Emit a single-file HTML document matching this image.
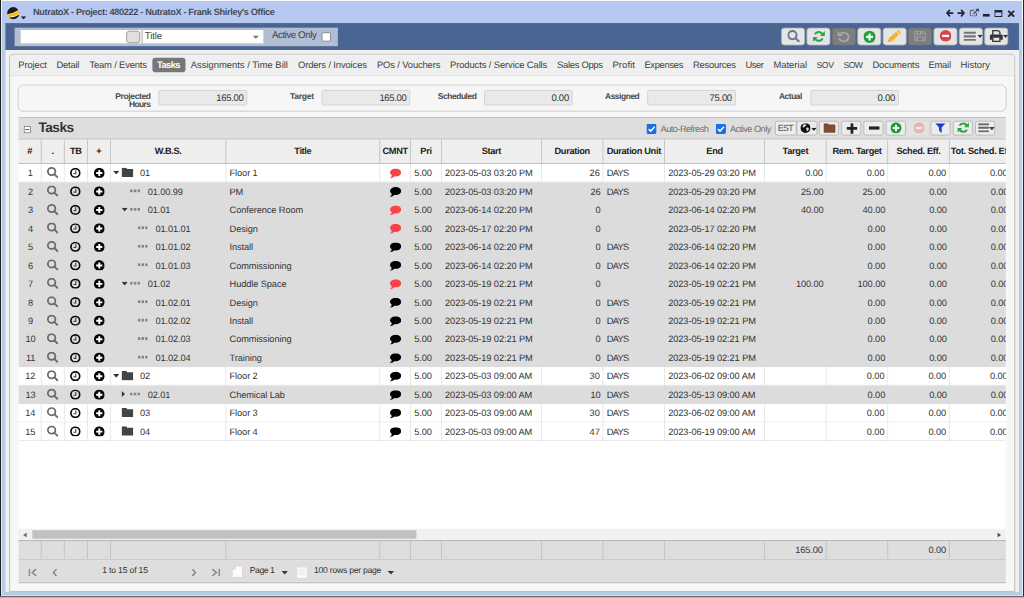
<!DOCTYPE html>
<html lang="en"><head><meta charset="utf-8"><title>NutratoX - Project: 480222</title>
<style>
html,body{margin:0;padding:0;}
body{width:1024px;height:598px;overflow:hidden;background:#b3b4b7;}
#w{position:absolute;left:0;top:0;width:1330.56px;height:777.03px;transform:scale(0.7696);transform-origin:0 0;overflow:hidden;
 font-family:"Liberation Sans",sans-serif;font-size:12px;color:#333;text-rendering:geometricPrecision;}
#w div{position:absolute;box-sizing:border-box;white-space:nowrap;}
#w svg{display:block;}
#f div{position:absolute;}
.t{line-height:1;}
.tbbtn{background:#e5e5e5;border:1px solid #aeb2b8;border-radius:4px;}
.tbbtn.dis{background:#7e7e7e;border-color:#747474;}
.gbtn{background:#ececec;border:1px solid #b0b0b0;border-radius:3px;}
.hd{font-weight:bold;color:#222;text-align:center;}
.cell{line-height:24.6px;height:24px;top:0;color:#333;letter-spacing:-0.12px;overflow:hidden;}
.r{text-align:right;}
</style></head>
<body>
<div id="w">
<div style="left:0px;top:0px;width:1330.56px;height:777.03px;background:#b3b4b7"></div>
<div style="left:0px;top:0px;width:1330.56px;height:774.3px;background:#b5cce4"></div>
<div style="left:0px;top:0px;width:1330.56px;height:30.02px;background:#b7c8f1"></div>
<div style="left:7px;top:30px;width:1317px;height:35px;background:#4b6592"></div>
<div style="left:7px;top:65px;width:1317px;height:704px;background:#f0f0f0"></div>
<div style="left:8.84px;top:8.58px;width:16.37px;height:16.37px"><svg viewBox="0 0 26 26" width="16.37" height="16.37"><circle cx="13" cy="13" r="12.6" fill="#1c1a1a"/><path d="M0.3 15.2 Q13 13.4 24.2 6.2 Q26 10.4 25.6 15.4 Q14 22.6 2.6 21.6 Q0.8 18.6 0.3 15.2 Z" fill="#fff"/><path d="M0.4 16.2 Q13 14.6 24.6 7.4 Q25.8 10.8 25.6 14.4 Q14 21.4 2.0 20.6 Q0.9 18.4 0.4 16.2 Z" fill="#f8bd17"/></svg></div>
<div style="left:26.51px;top:20.79px;width:7.15px;height:4.42px"><svg viewBox="0 0 10 5.4" width="7.15" height="4.42" preserveAspectRatio="none"><path d="M0 0 H10 L5 5.4 Z" fill="#1e1e1e"/></svg></div>
<div class="t" style="left:42.75px;top:9.72px;font-size:12px;font-weight:bold;color:#454b5a;letter-spacing:-0.487px;">NutratoX - Project: 480222 - NutratoX - Frank Shirley's Office</div>
<div style="left:1228.5px;top:12.28px;width:10.07px;height:10.07px"><svg viewBox="0 0 16 14" width="10.07" height="10.07" preserveAspectRatio="none"><path d="M16 7 H3.2" stroke="#23252b" stroke-width="3"/><path d="M8.4 1 L2.4 7 L8.4 13" fill="none" stroke="#23252b" stroke-width="3.2"/></svg></div>
<div style="left:1243.89px;top:12.28px;width:10.07px;height:10.07px"><svg viewBox="0 0 16 14" width="10.07" height="10.07" preserveAspectRatio="none"><path d="M0 7 H12.8" stroke="#23252b" stroke-width="3"/><path d="M7.6 1 L13.6 7 L7.6 13" fill="none" stroke="#23252b" stroke-width="3.2"/></svg></div>
<div style="left:1259.68px;top:10.98px;width:12.47px;height:10.52px"><svg viewBox="0 0 16 14" width="12.47" height="10.52" preserveAspectRatio="none"><path d="M11.2 8.2 V11.8 Q11.2 13.2 9.8 13.2 H2.2 Q0.8 13.2 0.8 11.8 V4.6 Q0.8 3.2 2.2 3.2 H7" fill="none" stroke="#3c4048" stroke-width="1.6"/><path d="M6.4 9.2 L13.2 2.4" stroke="#3c4048" stroke-width="2.1"/><path d="M9.2 0 H16 V6.8 Z" fill="#3c4048"/></svg></div>
<div style="left:1277.03px;top:18.32px;width:9.42px;height:3.51px"><svg viewBox="0 0 14 4" width="9.42" height="3.51" preserveAspectRatio="none"><rect x="0" y="0" width="14" height="4" fill="#23252b"/></svg></div>
<div style="left:1292.16px;top:12.6px;width:10.52px;height:9.36px"><svg viewBox="0 0 16 13" width="10.52" height="9.36" preserveAspectRatio="none"><path d="M0 0 H16 V13 H0 Z M2 4.4 V11 H14 V4.4 Z" fill="#23252b" fill-rule="evenodd"/></svg></div>
<div style="left:1308.86px;top:12.6px;width:9.75px;height:9.75px"><svg viewBox="0 0 14 14" width="9.75" height="9.75" preserveAspectRatio="none"><path d="M1.6 1.6 L12.4 12.4 M12.4 1.6 L1.6 12.4" stroke="#23252b" stroke-width="3.6"/></svg></div>
<div style="left:19px;top:36px;width:420px;height:24px;background:#b1bed3"></div>
<div style="left:26px;top:38px;width:158px;height:19px;background:#fff;border:1px solid #c8c8c8;border-top-color:#a8a8a8"></div>
<div style="left:164px;top:40px;width:18px;height:16px;background:#e0e0e0;border:1.5px solid #8a8a8a;border-radius:4px"></div>
<div style="left:185px;top:38px;width:158px;height:19px;background:#fff;border:1px solid #c8c8c8;border-top-color:#a8a8a8"></div>
<div class="t" style="left:188.02px;top:40.92px;font-size:12.6px;color:#444;letter-spacing:-0.149px;">Title</div>
<div style="left:327.96px;top:46.26px;width:8.84px;height:4.48px"><svg viewBox="0 0 10 5.4" width="8.84" height="4.48" preserveAspectRatio="none"><path d="M0 0 H10 L5 5.4 Z" fill="#777"/></svg></div>
<div class="t" style="left:353.3px;top:40.31px;font-size:12.7px;color:#3a3f4a;letter-spacing:-0.575px;">Active Only</div>
<div style="left:418px;top:42px;width:12px;height:12px;background:#fff;border:1px solid #767676;border-radius:2px"></div>
<div class="tbbtn" style="left:1015px;top:36px;width:31px;height:23px"></div>
<div class="tbbtn" style="left:1048px;top:36px;width:31px;height:23px"></div>
<div class="tbbtn dis" style="left:1081px;top:36px;width:31px;height:23px"></div>
<div class="tbbtn" style="left:1114px;top:36px;width:31px;height:23px"></div>
<div class="tbbtn" style="left:1147px;top:36px;width:31px;height:23px"></div>
<div class="tbbtn dis" style="left:1180px;top:36px;width:31px;height:23px"></div>
<div class="tbbtn" style="left:1213px;top:36px;width:31px;height:23px"></div>
<div class="tbbtn" style="left:1246px;top:36px;width:31px;height:23px"></div>
<div class="tbbtn" style="left:1279px;top:36px;width:31px;height:23px"></div>
<div style="left:1023.39px;top:39.24px;width:16.18px;height:16.05px"><svg viewBox="0 0 16 16" width="16.18" height="16.05" preserveAspectRatio="none"><circle cx="6.6" cy="6.6" r="5.3" fill="none" stroke="#64788f" stroke-width="2.5"/><path d="M10.6 10.6 L14.7 14.7" stroke="#64788f" stroke-width="2.7" stroke-linecap="round"/></svg></div>
<div style="left:1055.87px;top:39.89px;width:15.85px;height:14.75px"><svg viewBox="0 0.6 16 14.8" width="15.85" height="14.75" preserveAspectRatio="none"><path d="M13.2 6.3 A5.6 5.6 0 0 0 2.9 5.2" fill="none" stroke="#2aa745" stroke-width="2.7"/><path d="M15.9 0.8 V7.4 H9.3 Z" fill="#2aa745"/><path d="M2.8 9.7 A5.6 5.6 0 0 0 13.1 10.8" fill="none" stroke="#2aa745" stroke-width="2.7"/><path d="M0.1 15.2 V8.6 H6.7 Z" fill="#2aa745"/></svg></div>
<div style="left:1088.49px;top:40.41px;width:16.05px;height:14.55px"><svg viewBox="0 0.4 15.4 15.2" width="16.05" height="14.55" preserveAspectRatio="none"><path d="M3.9 4.6 A6 6 0 1 1 2.2 10.2" fill="none" stroke="#a6a6a6" stroke-width="2.5"/><path d="M0.2 0.6 V7.6 H7.2 Z" fill="#a6a6a6"/></svg></div>
<div style="left:1122.14px;top:39.89px;width:15.72px;height:15.85px"><svg viewBox="0 0 16 16" width="15.72" height="15.85" preserveAspectRatio="none"><circle cx="8" cy="8" r="8" fill="#1f9e3a"/><path d="M8 3.4V12.6M3.4 8H12.6" stroke="#fff" stroke-width="2.9"/></svg></div>
<div style="left:1154.37px;top:39.11px;width:16.5px;height:15.46px"><svg viewBox="0 0 16 16" width="16.5" height="15.46" preserveAspectRatio="none"><path d="M0.2 15.8 L1.0 11.2 L9.9 2.3 L13.7 6.1 L4.8 15.0 Z" fill="#f2b22a"/><path d="M10.9 1.3 L11.9 0.4 Q12.6 -0.1 13.3 0.5 L15.5 2.7 Q16.1 3.4 15.6 4.1 L14.7 5.1 Z" fill="#f2b22a"/><path d="M0.2 15.8 L0.7 13.2 L2.8 15.3 Z" fill="#d99a1c"/></svg></div>
<div style="left:1187.89px;top:40.02px;width:15.33px;height:13.64px"><svg viewBox="0 0 16 16" width="15.33" height="13.64" preserveAspectRatio="none"><path d="M0.8 2 Q0.8 0.8 2 0.8 H11.4 L15.2 4.6 V14 Q15.2 15.2 14 15.2 H2 Q0.8 15.2 0.8 14 Z" fill="none" stroke="#a3a3a3" stroke-width="1.7"/><path d="M4.2 1 V5.4 H10.4 V1" fill="none" stroke="#a3a3a3" stroke-width="1.6"/><path d="M3.8 15 V9.6 H12.2 V15" fill="none" stroke="#a3a3a3" stroke-width="1.6"/><rect x="7.8" y="1.8" width="1.6" height="2.6" fill="#a3a3a3"/></svg></div>
<div style="left:1221.02px;top:38.85px;width:15.46px;height:15.33px"><svg viewBox="0 0 16 16" width="15.46" height="15.33" preserveAspectRatio="none"><circle cx="8" cy="8" r="8" fill="#d5474d"/><path d="M3.4 8H12.6" stroke="#fff" stroke-width="2.9"/></svg></div>
<div style="left:1252.34px;top:40.54px;width:16.11px;height:12.47px"><svg viewBox="0 0 16 12" width="16.11" height="12.47" preserveAspectRatio="none"><path d="M0 1.3H16M0 6H16M0 10.7H16" stroke="#757575" stroke-width="2.6"/></svg></div>
<div style="left:1270.01px;top:45.48px;width:7.02px;height:4.22px"><svg viewBox="0 0 10 5.4" width="7.02" height="4.22" preserveAspectRatio="none"><path d="M0 0 H10 L5 5.4 Z" fill="#333"/></svg></div>
<div style="left:1285.6px;top:38.85px;width:17.28px;height:15.72px"><svg viewBox="0 0 16 15" width="17.28" height="15.72" preserveAspectRatio="none"><path d="M3.7 6 V0.8 H10.3 L12.3 2.8 V6" fill="none" stroke="#333" stroke-width="1.6"/><path d="M0 7.6 Q0 5.6 2 5.6 H14 Q16 5.6 16 7.6 V12 H12.6 V9.6 H3.4 V12 H0 Z" fill="#333"/><path d="M3.7 9.6 V14.2 H12.3 V9.6" fill="none" stroke="#333" stroke-width="1.6"/></svg></div>
<div style="left:1302.88px;top:45.48px;width:7.15px;height:4.22px"><svg viewBox="0 0 10 5.4" width="7.15" height="4.22" preserveAspectRatio="none"><path d="M0 0 H10 L5 5.4 Z" fill="#333"/></svg></div>
<div style="left:12px;top:70px;width:1307px;height:699px;background:#f7f7f7;border:1px solid #adadad;border-radius:5px 5px 0 0"></div>
<div style="left:13px;top:71px;width:1305px;height:28px;background:#efefef;border-bottom:1px solid #c4c4c4;border-radius:4px 4px 0 0"></div>
<div style="left:198px;top:75px;width:43px;height:19px;background:#777;border-radius:4px"></div>
<div class="t" style="left:23.65px;top:78.68px;font-size:12.2px;color:#3e3e3e;letter-spacing:-0.091px;">Project</div>
<div class="t" style="left:73.28px;top:78.68px;font-size:12.2px;color:#3e3e3e;letter-spacing:-0.261px;">Detail</div>
<div class="t" style="left:116.16px;top:78.68px;font-size:12.2px;color:#3e3e3e;letter-spacing:-0.205px;">Team / Events</div>
<div class="t" style="left:204.0px;top:78.68px;font-size:12.2px;font-weight:bold;color:#fff;letter-spacing:-0.755px;">Tasks</div>
<div class="t" style="left:247.92px;top:78.68px;font-size:12.2px;color:#3e3e3e;letter-spacing:0.009px;">Assignments / Time Bill</div>
<div class="t" style="left:387.21px;top:78.68px;font-size:12.2px;color:#3e3e3e;letter-spacing:-0.16px;">Orders / Invoices</div>
<div class="t" style="left:489.86px;top:78.68px;font-size:12.2px;color:#3e3e3e;letter-spacing:-0.183px;">POs / Vouchers</div>
<div class="t" style="left:584.72px;top:78.68px;font-size:12.2px;color:#3e3e3e;letter-spacing:-0.128px;">Products / Service Calls</div>
<div class="t" style="left:723.75px;top:78.68px;font-size:12.2px;color:#3e3e3e;letter-spacing:-0.366px;">Sales Opps</div>
<div class="t" style="left:795.74px;top:78.68px;font-size:12.2px;color:#3e3e3e;letter-spacing:0.178px;">Profit</div>
<div class="t" style="left:837.32px;top:78.68px;font-size:12.2px;color:#3e3e3e;letter-spacing:-0.415px;">Expenses</div>
<div class="t" style="left:900.47px;top:78.68px;font-size:12.2px;color:#3e3e3e;letter-spacing:-0.305px;">Resources</div>
<div class="t" style="left:968.56px;top:78.68px;font-size:12.2px;color:#3e3e3e;letter-spacing:-0.53px;">User</div>
<div class="t" style="left:1004.94px;top:78.68px;font-size:12.2px;color:#3e3e3e;letter-spacing:0.038px;">Material</div>
<div class="t" style="left:1060.81px;top:79.53px;font-size:11.2px;color:#3e3e3e;letter-spacing:-0.392px;">SOV</div>
<div class="t" style="left:1095.89px;top:79.53px;font-size:11.2px;color:#3e3e3e;letter-spacing:-0.643px;">SOW</div>
<div class="t" style="left:1133.58px;top:78.68px;font-size:12.2px;color:#3e3e3e;letter-spacing:-0.079px;">Documents</div>
<div class="t" style="left:1206.34px;top:78.68px;font-size:12.2px;color:#3e3e3e;letter-spacing:-0.285px;">Email</div>
<div class="t" style="left:1247.92px;top:78.68px;font-size:12.2px;color:#3e3e3e;letter-spacing:0.084px;">History</div>
<div style="left:23px;top:110px;width:1285px;height:35px;background:#f6f6f6;border:1px solid #c2c2c2;border-radius:7px"></div>
<div class="t" style="left:149.69px;top:120.76px;font-size:11px;font-weight:bold;color:#4a4a4a;letter-spacing:-0.451px;">Projected</div>
<div class="t" style="left:167.49px;top:131.15px;font-size:11px;font-weight:bold;color:#4a4a4a;letter-spacing:-0.766px;">Hours</div>
<div style="left:206px;top:117px;width:115px;height:20px;background:#e9e9e9;border:1px solid #cbcbcb;border-radius:2px"></div>
<div class="t" style="left:281.06px;top:121.13px;font-size:12.4px;color:#333;letter-spacing:-0.439px;">165.00</div>
<div class="t" style="left:376.82px;top:120.76px;font-size:11px;font-weight:bold;color:#4a4a4a;letter-spacing:-0.323px;">Target</div>
<div style="left:418px;top:117px;width:115px;height:20px;background:#e9e9e9;border:1px solid #cbcbcb;border-radius:2px"></div>
<div class="t" style="left:492.98px;top:121.13px;font-size:12.4px;color:#333;letter-spacing:-0.439px;">165.00</div>
<div class="t" style="left:568.87px;top:120.76px;font-size:11px;font-weight:bold;color:#4a4a4a;letter-spacing:-0.602px;">Scheduled</div>
<div style="left:629px;top:117px;width:115px;height:20px;background:#e9e9e9;border:1px solid #cbcbcb;border-radius:2px"></div>
<div class="t" style="left:716.48px;top:121.13px;font-size:12.4px;color:#333;letter-spacing:-0.335px;">0.00</div>
<div class="t" style="left:786.12px;top:120.76px;font-size:11px;font-weight:bold;color:#4a4a4a;letter-spacing:-0.613px;">Assigned</div>
<div style="left:841px;top:117px;width:115px;height:20px;background:#e9e9e9;border:1px solid #cbcbcb;border-radius:2px"></div>
<div class="t" style="left:922.04px;top:121.13px;font-size:12.4px;color:#333;letter-spacing:-0.416px;">75.00</div>
<div class="t" style="left:1012.21px;top:120.76px;font-size:11px;font-weight:bold;color:#4a4a4a;letter-spacing:-0.642px;">Actual</div>
<div style="left:1053px;top:117px;width:115px;height:20px;background:#e9e9e9;border:1px solid #cbcbcb;border-radius:2px"></div>
<div class="t" style="left:1140.14px;top:121.13px;font-size:12.4px;color:#333;letter-spacing:-0.335px;">0.00</div>
<div style="left:24px;top:152px;width:1283px;height:604px;background:#fff"></div>
<div style="left:24px;top:756px;width:1283px;height:2px;background:linear-gradient(#b4b4b4,#d0d0d0)"></div>
<div style="left:24px;top:152px;width:1283px;height:28px;background:#dedede;border-top:1px solid #bcbcbc"></div>
<div style="left:31px;top:164px;width:9px;height:9px;background:#fff;border:1px solid #777"></div>
<div style="left:33px;top:168px;width:5px;height:1px;background:#222"></div>
<div class="t" style="left:50.03px;top:156.58px;font-size:17.8px;font-weight:bold;color:#333;letter-spacing:-0.723px;">Tasks</div>
<div style="left:840.18px;top:160.73px;width:13.25px;height:12.99px"><svg viewBox="0 0 12 12" width="13.25" height="12.99" preserveAspectRatio="none"><rect x="0" y="0" width="12" height="12" rx="2" fill="#1a6fe8"/><path d="M2.6 6.3 L5 8.7 L9.6 3.5" fill="none" stroke="#fff" stroke-width="1.8"/></svg></div>
<div class="t" style="left:858.37px;top:161.1px;font-size:12px;color:#707070;letter-spacing:-0.722px;">Auto-Refresh</div>
<div style="left:930.48px;top:160.73px;width:13.25px;height:12.99px"><svg viewBox="0 0 12 12" width="13.25" height="12.99" preserveAspectRatio="none"><rect x="0" y="0" width="12" height="12" rx="2" fill="#1a6fe8"/><path d="M2.6 6.3 L5 8.7 L9.6 3.5" fill="none" stroke="#fff" stroke-width="1.8"/></svg></div>
<div class="t" style="left:948.54px;top:161.1px;font-size:12px;color:#707070;letter-spacing:-0.702px;">Active Only</div>
<div class="gbtn" style="left:1007px;top:157px;width:28px;height:19px;border-radius:3px 0 0 3px;background:#eee"></div>
<div class="t" style="left:1010.65px;top:161.18px;font-size:11.6px;color:#4c4c4c;letter-spacing:-0.885px;">EST</div>
<div class="gbtn" style="left:1035px;top:157px;width:27px;height:19px;border-radius:0 3px 3px 0"></div>
<div style="left:1039.89px;top:160.41px;width:13.32px;height:12.67px"><svg viewBox="0 0 16 16" width="13.32" height="12.67" preserveAspectRatio="none"><circle cx="8" cy="8" r="8" fill="#111"/><path d="M4.6 2.2 Q8 0.8 9.6 3 Q8.8 5.2 6.6 5.4 Q6 7.6 3.8 6.8 Q2.6 4.8 4.6 2.2 Z M9.2 7.4 Q12 6.4 13.4 9 Q13 12.2 10.6 13.4 Q9.2 12.2 9.8 10.4 Q8.2 9 9.2 7.4 Z" fill="#ddd"/></svg></div>
<div style="left:1053.79px;top:165.67px;width:7.15px;height:4.22px"><svg viewBox="0 0 10 5.4" width="7.15" height="4.22" preserveAspectRatio="none"><path d="M0 0 H10 L5 5.4 Z" fill="#222"/></svg></div>
<div class="gbtn" style="left:1064px;top:157px;width:26px;height:19px;"></div>
<div class="gbtn" style="left:1093px;top:157px;width:26px;height:19px;"></div>
<div class="gbtn" style="left:1122px;top:157px;width:26px;height:19px;"></div>
<div class="gbtn" style="left:1151px;top:157px;width:26px;height:19px;"></div>
<div class="gbtn" style="left:1180px;top:157px;width:26px;height:19px;background:#e3e3e3;border-color:#e0e0e0;"></div>
<div class="gbtn" style="left:1209px;top:157px;width:26px;height:19px;"></div>
<div class="gbtn" style="left:1238px;top:157px;width:26px;height:19px;"></div>
<div class="gbtn" style="left:1267px;top:157px;width:26px;height:19px;"></div>
<div style="left:1070.3px;top:160.08px;width:15.59px;height:12.6px"><svg viewBox="0 0 16 13" width="15.59" height="12.6" preserveAspectRatio="none"><path d="M0 1.4 Q0 0 1.4 0 H5.6 Q7 0 7 1.4 V1.8 H14.6 Q16 1.8 16 3.2 V11.6 Q16 13 14.6 13 H1.4 Q0 13 0 11.6 Z" fill="#7f4c33"/></svg></div>
<div style="left:1100.05px;top:159.76px;width:14.03px;height:13.77px"><svg viewBox="0 0 14 14" width="14.03" height="13.77" preserveAspectRatio="none"><path d="M7 0V14M0 7H14" stroke="#222" stroke-width="3.6"/></svg></div>
<div style="left:1129.29px;top:164.24px;width:14.03px;height:4.42px"><svg viewBox="0 0 14 3.6" width="14.03" height="4.42" preserveAspectRatio="none"><rect x="0" y="0" width="14" height="3.6" fill="#222"/></svg></div>
<div style="left:1157.35px;top:158.78px;width:14.42px;height:14.55px"><svg viewBox="0 0 16 16" width="14.42" height="14.55" preserveAspectRatio="none"><circle cx="8" cy="8" r="8" fill="#259a38"/><path d="M8 3.4V12.6M3.4 8H12.6" stroke="#fff" stroke-width="2.9"/></svg></div>
<div style="left:1186.59px;top:158.78px;width:14.42px;height:14.55px"><svg viewBox="0 0 16 16" width="14.42" height="14.55" preserveAspectRatio="none"><circle cx="8" cy="8" r="8" fill="#e9b3b8"/><path d="M3.4 8H12.6" stroke="#f6e9ea" stroke-width="2.9"/></svg></div>
<div style="left:1215.31px;top:160.41px;width:13.77px;height:12.67px"><svg viewBox="0 0 16 15" width="13.77" height="12.67" preserveAspectRatio="none"><path d="M0.3 0 H15.7 L10 6.6 V15 L6 11.8 V6.6 Z" fill="#1a3fd6"/></svg></div>
<div style="left:1244.28px;top:159.3px;width:15.2px;height:13.77px"><svg viewBox="0 0.6 16 14.8" width="15.2" height="13.77" preserveAspectRatio="none"><path d="M13.2 6.3 A5.6 5.6 0 0 0 2.9 5.2" fill="none" stroke="#2aa745" stroke-width="2.7"/><path d="M15.9 0.8 V7.4 H9.3 Z" fill="#2aa745"/><path d="M2.8 9.7 A5.6 5.6 0 0 0 13.1 10.8" fill="none" stroke="#2aa745" stroke-width="2.7"/><path d="M0.1 15.2 V8.6 H6.7 Z" fill="#2aa745"/></svg></div>
<div style="left:1270.53px;top:160.08px;width:14.62px;height:12.15px"><svg viewBox="0 0 16 12" width="14.62" height="12.15" preserveAspectRatio="none"><path d="M0 1.3H16M0 6H16M0 10.7H16" stroke="#666" stroke-width="2.6"/></svg></div>
<div style="left:1285.28px;top:164.83px;width:7.6px;height:4.42px"><svg viewBox="0 0 10 5.4" width="7.6" height="4.42" preserveAspectRatio="none"><path d="M0 0 H10 L5 5.4 Z" fill="#444"/></svg></div>
<div style="left:24px;top:180px;width:1283px;height:33px;background:#eeeeee;border-top:1px solid #b2b2b2;border-bottom:1px solid #b4b4b4;overflow:hidden">
<div class="hd" style="left:0px;top:0;width:30px;height:33px;line-height:31.6px;font-size:12px;letter-spacing:-0.42px;border-right:1px solid #bababa;overflow:hidden;">#</div>
<div class="hd" style="left:30px;top:0;width:30px;height:33px;line-height:31.6px;font-size:12px;letter-spacing:-0.42px;border-right:1px solid #bababa;overflow:hidden;">.</div>
<div class="hd" style="left:60px;top:0;width:30px;height:33px;line-height:31.6px;font-size:12px;letter-spacing:-0.42px;border-right:1px solid #bababa;overflow:hidden;">TB</div>
<div class="hd" style="left:90px;top:0;width:30px;height:33px;line-height:31.6px;font-size:12px;letter-spacing:-0.42px;border-right:1px solid #bababa;overflow:hidden;">+</div>
<div class="hd" style="left:120px;top:0;width:150px;height:33px;line-height:31.6px;font-size:12px;letter-spacing:-0.42px;border-right:1px solid #bababa;overflow:hidden;">W.B.S.</div>
<div class="hd" style="left:270px;top:0;width:200px;height:33px;line-height:31.6px;font-size:12px;letter-spacing:-0.42px;border-right:1px solid #bababa;overflow:hidden;">Title</div>
<div class="hd" style="left:470px;top:0;width:40px;height:33px;line-height:31.6px;font-size:12px;letter-spacing:-0.42px;border-right:1px solid #bababa;overflow:hidden;">CMNT</div>
<div class="hd" style="left:510px;top:0;width:40px;height:33px;line-height:31.6px;font-size:12px;letter-spacing:-0.42px;border-right:1px solid #bababa;overflow:hidden;">Pri</div>
<div class="hd" style="left:550px;top:0;width:130px;height:33px;line-height:31.6px;font-size:12px;letter-spacing:-0.42px;border-right:1px solid #bababa;overflow:hidden;">Start</div>
<div class="hd" style="left:680px;top:0;width:80px;height:33px;line-height:31.6px;font-size:12px;letter-spacing:-0.42px;border-right:1px solid #bababa;overflow:hidden;">Duration</div>
<div class="hd" style="left:760px;top:0;width:80px;height:33px;line-height:31.6px;font-size:12px;letter-spacing:-0.42px;border-right:1px solid #bababa;overflow:hidden;">Duration Unit</div>
<div class="hd" style="left:840px;top:0;width:130px;height:33px;line-height:31.6px;font-size:12px;letter-spacing:-0.42px;border-right:1px solid #bababa;overflow:hidden;">End</div>
<div class="hd" style="left:970px;top:0;width:80px;height:33px;line-height:31.6px;font-size:12px;letter-spacing:-0.42px;border-right:1px solid #bababa;overflow:hidden;">Target</div>
<div class="hd" style="left:1050px;top:0;width:80px;height:33px;line-height:31.6px;font-size:12px;letter-spacing:-0.42px;border-right:1px solid #bababa;overflow:hidden;">Rem. Target</div>
<div class="hd" style="left:1130px;top:0;width:80px;height:33px;line-height:31.6px;font-size:12px;letter-spacing:-0.42px;border-right:1px solid #bababa;overflow:hidden;">Sched. Eff.</div>
<div class="hd" style="left:1210px;top:0;width:80px;height:33px;line-height:31.6px;font-size:12px;letter-spacing:-0.42px;border-right:1px solid #bababa;overflow:hidden;text-align:left;padding-left:1.5px;">Tot. Sched. Eff.</div>
</div>
<div style="left:24px;top:213px;width:1283px;height:474px;overflow:hidden">
<div style="left:0;top:0px;width:1283px;height:24px;background:#fff;border-bottom:1px solid #e4e4e4;">
<div class="cell" style="left:0px;width:30px;border-right:1px solid #e2e2e2;text-align:center;padding-left:1.6px;">1</div>
<div class="cell" style="left:30px;width:30px;border-right:1px solid #e2e2e2;"></div>
<div class="cell" style="left:60px;width:30px;border-right:1px solid #e2e2e2;"></div>
<div class="cell" style="left:90px;width:30px;border-right:1px solid #e2e2e2;"></div>
<div class="cell" style="left:120px;width:150px;border-right:1px solid #e2e2e2;"></div>
<div class="cell" style="left:470px;width:40px;border-right:1px solid #e2e2e2;"></div>
<div style="left:37.33px;top:4.29px;width:14.75px;height:14.29px"><svg viewBox="0 0 16 16" width="14.75" height="14.29" preserveAspectRatio="none"><circle cx="6.6" cy="6.6" r="5.3" fill="none" stroke="#6a6a6a" stroke-width="2.5"/><path d="M10.6 10.6 L14.7 14.7" stroke="#6a6a6a" stroke-width="2.7" stroke-linecap="round"/></svg></div>
<div style="left:67.35px;top:4.61px;width:13.77px;height:13.45px"><svg viewBox="0 0 16 16" width="13.77" height="13.45" preserveAspectRatio="none"><circle cx="8" cy="8" r="6.7" fill="none" stroke="#0a0a0a" stroke-width="2.6"/><path d="M8.7 3.9 V9.1 H5.2" fill="none" stroke="#444" stroke-width="1.7"/></svg></div>
<div style="left:97.62px;top:4.61px;width:14.03px;height:13.77px"><svg viewBox="0 0 16 16" width="14.03" height="13.77" preserveAspectRatio="none"><circle cx="8" cy="8" r="8" fill="#050505"/><path d="M8 3.4V12.6M3.4 8H12.6" stroke="#fff" stroke-width="2.9"/></svg></div>
<div style="left:123.48px;top:9.36px;width:8.06px;height:4.87px"><svg viewBox="0 0 10 5.4" width="8.06" height="4.87" preserveAspectRatio="none"><path d="M0 0 H10 L5 5.4 Z" fill="#333"/></svg></div>
<div style="left:133.61px;top:4.61px;width:15.72px;height:12.67px"><svg viewBox="0 0 16 13" width="15.72" height="12.67" preserveAspectRatio="none"><path d="M0 1.4 Q0 0 1.4 0 H5.6 Q7 0 7 1.4 V1.8 H14.6 Q16 1.8 16 3.2 V11.6 Q16 13 14.6 13 H1.4 Q0 13 0 11.6 Z" fill="#444"/></svg></div>
<div class="cell" style="left:157.91px;">01</div>
<div class="cell" style="left:270px;width:200px;border-right:1px solid #e2e2e2;padding-left:4.29px;">Floor 1</div>
<div style="left:481.85px;top:6.11px;width:15.46px;height:12.86px"><svg viewBox="0 0 16 13.4" width="15.46" height="12.86" preserveAspectRatio="none"><ellipse cx="8.4" cy="5.4" rx="7.6" ry="5.4" fill="#f8434b"/><path d="M3.4 8.6 Q3.2 11.6 0.2 13.3 Q5 13.2 7.4 10 Z" fill="#f8434b"/></svg></div>
<div class="cell" style="left:510px;width:40px;border-right:1px solid #e2e2e2;padding-left:4.29px;">5.00</div>
<div class="cell" style="left:550px;width:130px;border-right:1px solid #e2e2e2;padding-left:4.29px;">2023-05-03 03:20 PM</div>
<div class="cell" style="left:680px;width:80px;border-right:1px solid #e2e2e2;text-align:right;padding-right:3.77px;">26</div>
<div class="cell" style="left:760px;width:80px;border-right:1px solid #e2e2e2;padding-left:4.29px;letter-spacing:-0.8px;">DAYS</div>
<div class="cell" style="left:840px;width:130px;border-right:1px solid #e2e2e2;padding-left:4.29px;">2023-05-29 03:20 PM</div>
<div class="cell" style="left:970px;width:80px;border-right:1px solid #e2e2e2;text-align:right;padding-right:3.77px;">0.00</div>
<div class="cell" style="left:1050px;width:80px;border-right:1px solid #e2e2e2;text-align:right;padding-right:3.77px;">0.00</div>
<div class="cell" style="left:1130px;width:80px;border-right:1px solid #e2e2e2;text-align:right;padding-right:3.77px;">0.00</div>
<div class="cell" style="left:1210px;width:80px;border-right:1px solid #e2e2e2;text-align:right;padding-right:3.77px;">0.00</div>
</div>
<div style="left:0;top:24px;width:1283px;height:25px;background:#dcdcdc;">
<div class="cell" style="left:0px;width:30px;text-align:center;padding-left:1.6px;">2</div>
<div style="left:37.33px;top:4.29px;width:14.75px;height:14.29px"><svg viewBox="0 0 16 16" width="14.75" height="14.29" preserveAspectRatio="none"><circle cx="6.6" cy="6.6" r="5.3" fill="none" stroke="#6a6a6a" stroke-width="2.5"/><path d="M10.6 10.6 L14.7 14.7" stroke="#6a6a6a" stroke-width="2.7" stroke-linecap="round"/></svg></div>
<div style="left:67.35px;top:4.61px;width:13.77px;height:13.45px"><svg viewBox="0 0 16 16" width="13.77" height="13.45" preserveAspectRatio="none"><circle cx="8" cy="8" r="6.7" fill="none" stroke="#0a0a0a" stroke-width="2.6"/><path d="M8.7 3.9 V9.1 H5.2" fill="none" stroke="#444" stroke-width="1.7"/></svg></div>
<div style="left:97.62px;top:4.61px;width:14.03px;height:13.77px"><svg viewBox="0 0 16 16" width="14.03" height="13.77" preserveAspectRatio="none"><circle cx="8" cy="8" r="8" fill="#050505"/><path d="M8 3.4V12.6M3.4 8H12.6" stroke="#fff" stroke-width="2.9"/></svg></div>
<div style="left:145.18px;top:8.84px;width:12.86px;height:4.03px"><svg viewBox="0 0 12 3" width="12.86" height="4.03" preserveAspectRatio="none"><rect x="0" y="0" width="3" height="3" fill="#858585"/><rect x="4.5" y="0" width="3" height="3" fill="#858585"/><rect x="9" y="0" width="3" height="3" fill="#858585"/></svg></div>
<div class="cell" style="left:167.92px;">01.00.99</div>
<div class="cell" style="left:270px;width:200px;padding-left:4.29px;">PM</div>
<div style="left:481.85px;top:6.11px;width:15.46px;height:12.86px"><svg viewBox="0 0 16 13.4" width="15.46" height="12.86" preserveAspectRatio="none"><ellipse cx="8.4" cy="5.4" rx="7.6" ry="5.4" fill="#000"/><path d="M3.4 8.6 Q3.2 11.6 0.2 13.3 Q5 13.2 7.4 10 Z" fill="#000"/></svg></div>
<div class="cell" style="left:510px;width:40px;padding-left:4.29px;">5.00</div>
<div class="cell" style="left:550px;width:130px;padding-left:4.29px;">2023-05-03 03:20 PM</div>
<div class="cell" style="left:680px;width:80px;text-align:right;padding-right:3.77px;">26</div>
<div class="cell" style="left:760px;width:80px;padding-left:4.29px;letter-spacing:-0.8px;">DAYS</div>
<div class="cell" style="left:840px;width:130px;padding-left:4.29px;">2023-05-29 03:20 PM</div>
<div class="cell" style="left:970px;width:80px;text-align:right;padding-right:3.77px;">25.00</div>
<div class="cell" style="left:1050px;width:80px;text-align:right;padding-right:3.77px;">25.00</div>
<div class="cell" style="left:1130px;width:80px;text-align:right;padding-right:3.77px;">0.00</div>
<div class="cell" style="left:1210px;width:80px;text-align:right;padding-right:3.77px;">0.00</div>
</div>
<div style="left:0;top:48px;width:1283px;height:25px;background:#dcdcdc;">
<div class="cell" style="left:0px;width:30px;text-align:center;padding-left:1.6px;">3</div>
<div style="left:37.33px;top:4.29px;width:14.75px;height:14.29px"><svg viewBox="0 0 16 16" width="14.75" height="14.29" preserveAspectRatio="none"><circle cx="6.6" cy="6.6" r="5.3" fill="none" stroke="#6a6a6a" stroke-width="2.5"/><path d="M10.6 10.6 L14.7 14.7" stroke="#6a6a6a" stroke-width="2.7" stroke-linecap="round"/></svg></div>
<div style="left:67.35px;top:4.61px;width:13.77px;height:13.45px"><svg viewBox="0 0 16 16" width="13.77" height="13.45" preserveAspectRatio="none"><circle cx="8" cy="8" r="6.7" fill="none" stroke="#0a0a0a" stroke-width="2.6"/><path d="M8.7 3.9 V9.1 H5.2" fill="none" stroke="#444" stroke-width="1.7"/></svg></div>
<div style="left:97.62px;top:4.61px;width:14.03px;height:13.77px"><svg viewBox="0 0 16 16" width="14.03" height="13.77" preserveAspectRatio="none"><circle cx="8" cy="8" r="8" fill="#050505"/><path d="M8 3.4V12.6M3.4 8H12.6" stroke="#fff" stroke-width="2.9"/></svg></div>
<div style="left:133.74px;top:9.36px;width:8.06px;height:4.87px"><svg viewBox="0 0 10 5.4" width="8.06" height="4.87" preserveAspectRatio="none"><path d="M0 0 H10 L5 5.4 Z" fill="#333"/></svg></div>
<div style="left:145.18px;top:8.84px;width:12.86px;height:4.03px"><svg viewBox="0 0 12 3" width="12.86" height="4.03" preserveAspectRatio="none"><rect x="0" y="0" width="3" height="3" fill="#858585"/><rect x="4.5" y="0" width="3" height="3" fill="#858585"/><rect x="9" y="0" width="3" height="3" fill="#858585"/></svg></div>
<div class="cell" style="left:167.92px;">01.01</div>
<div class="cell" style="left:270px;width:200px;padding-left:4.29px;">Conference Room</div>
<div style="left:481.85px;top:6.11px;width:15.46px;height:12.86px"><svg viewBox="0 0 16 13.4" width="15.46" height="12.86" preserveAspectRatio="none"><ellipse cx="8.4" cy="5.4" rx="7.6" ry="5.4" fill="#f8434b"/><path d="M3.4 8.6 Q3.2 11.6 0.2 13.3 Q5 13.2 7.4 10 Z" fill="#f8434b"/></svg></div>
<div class="cell" style="left:510px;width:40px;padding-left:4.29px;">5.00</div>
<div class="cell" style="left:550px;width:130px;padding-left:4.29px;">2023-06-14 02:20 PM</div>
<div class="cell" style="left:680px;width:80px;text-align:right;padding-right:3.77px;">0</div>
<div class="cell" style="left:760px;width:80px;padding-left:4.29px;letter-spacing:-0.8px;"></div>
<div class="cell" style="left:840px;width:130px;padding-left:4.29px;">2023-06-14 02:20 PM</div>
<div class="cell" style="left:970px;width:80px;text-align:right;padding-right:3.77px;">40.00</div>
<div class="cell" style="left:1050px;width:80px;text-align:right;padding-right:3.77px;">40.00</div>
<div class="cell" style="left:1130px;width:80px;text-align:right;padding-right:3.77px;">0.00</div>
<div class="cell" style="left:1210px;width:80px;text-align:right;padding-right:3.77px;">0.00</div>
</div>
<div style="left:0;top:72px;width:1283px;height:25px;background:#dcdcdc;">
<div class="cell" style="left:0px;width:30px;text-align:center;padding-left:1.6px;">4</div>
<div style="left:37.33px;top:4.29px;width:14.75px;height:14.29px"><svg viewBox="0 0 16 16" width="14.75" height="14.29" preserveAspectRatio="none"><circle cx="6.6" cy="6.6" r="5.3" fill="none" stroke="#6a6a6a" stroke-width="2.5"/><path d="M10.6 10.6 L14.7 14.7" stroke="#6a6a6a" stroke-width="2.7" stroke-linecap="round"/></svg></div>
<div style="left:67.35px;top:4.61px;width:13.77px;height:13.45px"><svg viewBox="0 0 16 16" width="13.77" height="13.45" preserveAspectRatio="none"><circle cx="8" cy="8" r="6.7" fill="none" stroke="#0a0a0a" stroke-width="2.6"/><path d="M8.7 3.9 V9.1 H5.2" fill="none" stroke="#444" stroke-width="1.7"/></svg></div>
<div style="left:97.62px;top:4.61px;width:14.03px;height:13.77px"><svg viewBox="0 0 16 16" width="14.03" height="13.77" preserveAspectRatio="none"><circle cx="8" cy="8" r="8" fill="#050505"/><path d="M8 3.4V12.6M3.4 8H12.6" stroke="#fff" stroke-width="2.9"/></svg></div>
<div style="left:155.18px;top:8.84px;width:12.86px;height:4.03px"><svg viewBox="0 0 12 3" width="12.86" height="4.03" preserveAspectRatio="none"><rect x="0" y="0" width="3" height="3" fill="#858585"/><rect x="4.5" y="0" width="3" height="3" fill="#858585"/><rect x="9" y="0" width="3" height="3" fill="#858585"/></svg></div>
<div class="cell" style="left:177.92px;">01.01.01</div>
<div class="cell" style="left:270px;width:200px;padding-left:4.29px;">Design</div>
<div style="left:481.85px;top:6.11px;width:15.46px;height:12.86px"><svg viewBox="0 0 16 13.4" width="15.46" height="12.86" preserveAspectRatio="none"><ellipse cx="8.4" cy="5.4" rx="7.6" ry="5.4" fill="#f8434b"/><path d="M3.4 8.6 Q3.2 11.6 0.2 13.3 Q5 13.2 7.4 10 Z" fill="#f8434b"/></svg></div>
<div class="cell" style="left:510px;width:40px;padding-left:4.29px;">5.00</div>
<div class="cell" style="left:550px;width:130px;padding-left:4.29px;">2023-05-17 02:20 PM</div>
<div class="cell" style="left:680px;width:80px;text-align:right;padding-right:3.77px;">0</div>
<div class="cell" style="left:760px;width:80px;padding-left:4.29px;letter-spacing:-0.8px;"></div>
<div class="cell" style="left:840px;width:130px;padding-left:4.29px;">2023-05-17 02:20 PM</div>
<div class="cell" style="left:970px;width:80px;text-align:right;padding-right:3.77px;"></div>
<div class="cell" style="left:1050px;width:80px;text-align:right;padding-right:3.77px;">0.00</div>
<div class="cell" style="left:1130px;width:80px;text-align:right;padding-right:3.77px;">0.00</div>
<div class="cell" style="left:1210px;width:80px;text-align:right;padding-right:3.77px;">0.00</div>
</div>
<div style="left:0;top:96px;width:1283px;height:25px;background:#dcdcdc;">
<div class="cell" style="left:0px;width:30px;text-align:center;padding-left:1.6px;">5</div>
<div style="left:37.33px;top:4.29px;width:14.75px;height:14.29px"><svg viewBox="0 0 16 16" width="14.75" height="14.29" preserveAspectRatio="none"><circle cx="6.6" cy="6.6" r="5.3" fill="none" stroke="#6a6a6a" stroke-width="2.5"/><path d="M10.6 10.6 L14.7 14.7" stroke="#6a6a6a" stroke-width="2.7" stroke-linecap="round"/></svg></div>
<div style="left:67.35px;top:4.61px;width:13.77px;height:13.45px"><svg viewBox="0 0 16 16" width="13.77" height="13.45" preserveAspectRatio="none"><circle cx="8" cy="8" r="6.7" fill="none" stroke="#0a0a0a" stroke-width="2.6"/><path d="M8.7 3.9 V9.1 H5.2" fill="none" stroke="#444" stroke-width="1.7"/></svg></div>
<div style="left:97.62px;top:4.61px;width:14.03px;height:13.77px"><svg viewBox="0 0 16 16" width="14.03" height="13.77" preserveAspectRatio="none"><circle cx="8" cy="8" r="8" fill="#050505"/><path d="M8 3.4V12.6M3.4 8H12.6" stroke="#fff" stroke-width="2.9"/></svg></div>
<div style="left:155.18px;top:8.84px;width:12.86px;height:4.03px"><svg viewBox="0 0 12 3" width="12.86" height="4.03" preserveAspectRatio="none"><rect x="0" y="0" width="3" height="3" fill="#858585"/><rect x="4.5" y="0" width="3" height="3" fill="#858585"/><rect x="9" y="0" width="3" height="3" fill="#858585"/></svg></div>
<div class="cell" style="left:177.92px;">01.01.02</div>
<div class="cell" style="left:270px;width:200px;padding-left:4.29px;">Install</div>
<div style="left:481.85px;top:6.11px;width:15.46px;height:12.86px"><svg viewBox="0 0 16 13.4" width="15.46" height="12.86" preserveAspectRatio="none"><ellipse cx="8.4" cy="5.4" rx="7.6" ry="5.4" fill="#000"/><path d="M3.4 8.6 Q3.2 11.6 0.2 13.3 Q5 13.2 7.4 10 Z" fill="#000"/></svg></div>
<div class="cell" style="left:510px;width:40px;padding-left:4.29px;">5.00</div>
<div class="cell" style="left:550px;width:130px;padding-left:4.29px;">2023-06-14 02:20 PM</div>
<div class="cell" style="left:680px;width:80px;text-align:right;padding-right:3.77px;">0</div>
<div class="cell" style="left:760px;width:80px;padding-left:4.29px;letter-spacing:-0.8px;">DAYS</div>
<div class="cell" style="left:840px;width:130px;padding-left:4.29px;">2023-06-14 02:20 PM</div>
<div class="cell" style="left:970px;width:80px;text-align:right;padding-right:3.77px;"></div>
<div class="cell" style="left:1050px;width:80px;text-align:right;padding-right:3.77px;">0.00</div>
<div class="cell" style="left:1130px;width:80px;text-align:right;padding-right:3.77px;">0.00</div>
<div class="cell" style="left:1210px;width:80px;text-align:right;padding-right:3.77px;">0.00</div>
</div>
<div style="left:0;top:120px;width:1283px;height:25px;background:#dcdcdc;">
<div class="cell" style="left:0px;width:30px;text-align:center;padding-left:1.6px;">6</div>
<div style="left:37.33px;top:4.29px;width:14.75px;height:14.29px"><svg viewBox="0 0 16 16" width="14.75" height="14.29" preserveAspectRatio="none"><circle cx="6.6" cy="6.6" r="5.3" fill="none" stroke="#6a6a6a" stroke-width="2.5"/><path d="M10.6 10.6 L14.7 14.7" stroke="#6a6a6a" stroke-width="2.7" stroke-linecap="round"/></svg></div>
<div style="left:67.35px;top:4.61px;width:13.77px;height:13.45px"><svg viewBox="0 0 16 16" width="13.77" height="13.45" preserveAspectRatio="none"><circle cx="8" cy="8" r="6.7" fill="none" stroke="#0a0a0a" stroke-width="2.6"/><path d="M8.7 3.9 V9.1 H5.2" fill="none" stroke="#444" stroke-width="1.7"/></svg></div>
<div style="left:97.62px;top:4.61px;width:14.03px;height:13.77px"><svg viewBox="0 0 16 16" width="14.03" height="13.77" preserveAspectRatio="none"><circle cx="8" cy="8" r="8" fill="#050505"/><path d="M8 3.4V12.6M3.4 8H12.6" stroke="#fff" stroke-width="2.9"/></svg></div>
<div style="left:155.18px;top:8.84px;width:12.86px;height:4.03px"><svg viewBox="0 0 12 3" width="12.86" height="4.03" preserveAspectRatio="none"><rect x="0" y="0" width="3" height="3" fill="#858585"/><rect x="4.5" y="0" width="3" height="3" fill="#858585"/><rect x="9" y="0" width="3" height="3" fill="#858585"/></svg></div>
<div class="cell" style="left:177.92px;">01.01.03</div>
<div class="cell" style="left:270px;width:200px;padding-left:4.29px;">Commissioning</div>
<div style="left:481.85px;top:6.11px;width:15.46px;height:12.86px"><svg viewBox="0 0 16 13.4" width="15.46" height="12.86" preserveAspectRatio="none"><ellipse cx="8.4" cy="5.4" rx="7.6" ry="5.4" fill="#000"/><path d="M3.4 8.6 Q3.2 11.6 0.2 13.3 Q5 13.2 7.4 10 Z" fill="#000"/></svg></div>
<div class="cell" style="left:510px;width:40px;padding-left:4.29px;">5.00</div>
<div class="cell" style="left:550px;width:130px;padding-left:4.29px;">2023-06-14 02:20 PM</div>
<div class="cell" style="left:680px;width:80px;text-align:right;padding-right:3.77px;">0</div>
<div class="cell" style="left:760px;width:80px;padding-left:4.29px;letter-spacing:-0.8px;">DAYS</div>
<div class="cell" style="left:840px;width:130px;padding-left:4.29px;">2023-06-14 02:20 PM</div>
<div class="cell" style="left:970px;width:80px;text-align:right;padding-right:3.77px;"></div>
<div class="cell" style="left:1050px;width:80px;text-align:right;padding-right:3.77px;">0.00</div>
<div class="cell" style="left:1130px;width:80px;text-align:right;padding-right:3.77px;">0.00</div>
<div class="cell" style="left:1210px;width:80px;text-align:right;padding-right:3.77px;">0.00</div>
</div>
<div style="left:0;top:144px;width:1283px;height:25px;background:#dcdcdc;">
<div class="cell" style="left:0px;width:30px;text-align:center;padding-left:1.6px;">7</div>
<div style="left:37.33px;top:4.29px;width:14.75px;height:14.29px"><svg viewBox="0 0 16 16" width="14.75" height="14.29" preserveAspectRatio="none"><circle cx="6.6" cy="6.6" r="5.3" fill="none" stroke="#6a6a6a" stroke-width="2.5"/><path d="M10.6 10.6 L14.7 14.7" stroke="#6a6a6a" stroke-width="2.7" stroke-linecap="round"/></svg></div>
<div style="left:67.35px;top:4.61px;width:13.77px;height:13.45px"><svg viewBox="0 0 16 16" width="13.77" height="13.45" preserveAspectRatio="none"><circle cx="8" cy="8" r="6.7" fill="none" stroke="#0a0a0a" stroke-width="2.6"/><path d="M8.7 3.9 V9.1 H5.2" fill="none" stroke="#444" stroke-width="1.7"/></svg></div>
<div style="left:97.62px;top:4.61px;width:14.03px;height:13.77px"><svg viewBox="0 0 16 16" width="14.03" height="13.77" preserveAspectRatio="none"><circle cx="8" cy="8" r="8" fill="#050505"/><path d="M8 3.4V12.6M3.4 8H12.6" stroke="#fff" stroke-width="2.9"/></svg></div>
<div style="left:133.74px;top:9.36px;width:8.06px;height:4.87px"><svg viewBox="0 0 10 5.4" width="8.06" height="4.87" preserveAspectRatio="none"><path d="M0 0 H10 L5 5.4 Z" fill="#333"/></svg></div>
<div style="left:145.18px;top:8.84px;width:12.86px;height:4.03px"><svg viewBox="0 0 12 3" width="12.86" height="4.03" preserveAspectRatio="none"><rect x="0" y="0" width="3" height="3" fill="#858585"/><rect x="4.5" y="0" width="3" height="3" fill="#858585"/><rect x="9" y="0" width="3" height="3" fill="#858585"/></svg></div>
<div class="cell" style="left:167.92px;">01.02</div>
<div class="cell" style="left:270px;width:200px;padding-left:4.29px;">Huddle Space</div>
<div style="left:481.85px;top:6.11px;width:15.46px;height:12.86px"><svg viewBox="0 0 16 13.4" width="15.46" height="12.86" preserveAspectRatio="none"><ellipse cx="8.4" cy="5.4" rx="7.6" ry="5.4" fill="#f8434b"/><path d="M3.4 8.6 Q3.2 11.6 0.2 13.3 Q5 13.2 7.4 10 Z" fill="#f8434b"/></svg></div>
<div class="cell" style="left:510px;width:40px;padding-left:4.29px;">5.00</div>
<div class="cell" style="left:550px;width:130px;padding-left:4.29px;">2023-05-19 02:21 PM</div>
<div class="cell" style="left:680px;width:80px;text-align:right;padding-right:3.77px;">0</div>
<div class="cell" style="left:760px;width:80px;padding-left:4.29px;letter-spacing:-0.8px;"></div>
<div class="cell" style="left:840px;width:130px;padding-left:4.29px;">2023-05-19 02:21 PM</div>
<div class="cell" style="left:970px;width:80px;text-align:right;padding-right:3.77px;">100.00</div>
<div class="cell" style="left:1050px;width:80px;text-align:right;padding-right:3.77px;">100.00</div>
<div class="cell" style="left:1130px;width:80px;text-align:right;padding-right:3.77px;">0.00</div>
<div class="cell" style="left:1210px;width:80px;text-align:right;padding-right:3.77px;">0.00</div>
</div>
<div style="left:0;top:168px;width:1283px;height:25px;background:#dcdcdc;">
<div class="cell" style="left:0px;width:30px;text-align:center;padding-left:1.6px;">8</div>
<div style="left:37.33px;top:4.29px;width:14.75px;height:14.29px"><svg viewBox="0 0 16 16" width="14.75" height="14.29" preserveAspectRatio="none"><circle cx="6.6" cy="6.6" r="5.3" fill="none" stroke="#6a6a6a" stroke-width="2.5"/><path d="M10.6 10.6 L14.7 14.7" stroke="#6a6a6a" stroke-width="2.7" stroke-linecap="round"/></svg></div>
<div style="left:67.35px;top:4.61px;width:13.77px;height:13.45px"><svg viewBox="0 0 16 16" width="13.77" height="13.45" preserveAspectRatio="none"><circle cx="8" cy="8" r="6.7" fill="none" stroke="#0a0a0a" stroke-width="2.6"/><path d="M8.7 3.9 V9.1 H5.2" fill="none" stroke="#444" stroke-width="1.7"/></svg></div>
<div style="left:97.62px;top:4.61px;width:14.03px;height:13.77px"><svg viewBox="0 0 16 16" width="14.03" height="13.77" preserveAspectRatio="none"><circle cx="8" cy="8" r="8" fill="#050505"/><path d="M8 3.4V12.6M3.4 8H12.6" stroke="#fff" stroke-width="2.9"/></svg></div>
<div style="left:155.18px;top:8.84px;width:12.86px;height:4.03px"><svg viewBox="0 0 12 3" width="12.86" height="4.03" preserveAspectRatio="none"><rect x="0" y="0" width="3" height="3" fill="#858585"/><rect x="4.5" y="0" width="3" height="3" fill="#858585"/><rect x="9" y="0" width="3" height="3" fill="#858585"/></svg></div>
<div class="cell" style="left:177.92px;">01.02.01</div>
<div class="cell" style="left:270px;width:200px;padding-left:4.29px;">Design</div>
<div style="left:481.85px;top:6.11px;width:15.46px;height:12.86px"><svg viewBox="0 0 16 13.4" width="15.46" height="12.86" preserveAspectRatio="none"><ellipse cx="8.4" cy="5.4" rx="7.6" ry="5.4" fill="#000"/><path d="M3.4 8.6 Q3.2 11.6 0.2 13.3 Q5 13.2 7.4 10 Z" fill="#000"/></svg></div>
<div class="cell" style="left:510px;width:40px;padding-left:4.29px;">5.00</div>
<div class="cell" style="left:550px;width:130px;padding-left:4.29px;">2023-05-19 02:21 PM</div>
<div class="cell" style="left:680px;width:80px;text-align:right;padding-right:3.77px;">0</div>
<div class="cell" style="left:760px;width:80px;padding-left:4.29px;letter-spacing:-0.8px;">DAYS</div>
<div class="cell" style="left:840px;width:130px;padding-left:4.29px;">2023-05-19 02:21 PM</div>
<div class="cell" style="left:970px;width:80px;text-align:right;padding-right:3.77px;"></div>
<div class="cell" style="left:1050px;width:80px;text-align:right;padding-right:3.77px;">0.00</div>
<div class="cell" style="left:1130px;width:80px;text-align:right;padding-right:3.77px;">0.00</div>
<div class="cell" style="left:1210px;width:80px;text-align:right;padding-right:3.77px;">0.00</div>
</div>
<div style="left:0;top:192px;width:1283px;height:25px;background:#dcdcdc;">
<div class="cell" style="left:0px;width:30px;text-align:center;padding-left:1.6px;">9</div>
<div style="left:37.33px;top:4.29px;width:14.75px;height:14.29px"><svg viewBox="0 0 16 16" width="14.75" height="14.29" preserveAspectRatio="none"><circle cx="6.6" cy="6.6" r="5.3" fill="none" stroke="#6a6a6a" stroke-width="2.5"/><path d="M10.6 10.6 L14.7 14.7" stroke="#6a6a6a" stroke-width="2.7" stroke-linecap="round"/></svg></div>
<div style="left:67.35px;top:4.61px;width:13.77px;height:13.45px"><svg viewBox="0 0 16 16" width="13.77" height="13.45" preserveAspectRatio="none"><circle cx="8" cy="8" r="6.7" fill="none" stroke="#0a0a0a" stroke-width="2.6"/><path d="M8.7 3.9 V9.1 H5.2" fill="none" stroke="#444" stroke-width="1.7"/></svg></div>
<div style="left:97.62px;top:4.61px;width:14.03px;height:13.77px"><svg viewBox="0 0 16 16" width="14.03" height="13.77" preserveAspectRatio="none"><circle cx="8" cy="8" r="8" fill="#050505"/><path d="M8 3.4V12.6M3.4 8H12.6" stroke="#fff" stroke-width="2.9"/></svg></div>
<div style="left:155.18px;top:8.84px;width:12.86px;height:4.03px"><svg viewBox="0 0 12 3" width="12.86" height="4.03" preserveAspectRatio="none"><rect x="0" y="0" width="3" height="3" fill="#858585"/><rect x="4.5" y="0" width="3" height="3" fill="#858585"/><rect x="9" y="0" width="3" height="3" fill="#858585"/></svg></div>
<div class="cell" style="left:177.92px;">01.02.02</div>
<div class="cell" style="left:270px;width:200px;padding-left:4.29px;">Install</div>
<div style="left:481.85px;top:6.11px;width:15.46px;height:12.86px"><svg viewBox="0 0 16 13.4" width="15.46" height="12.86" preserveAspectRatio="none"><ellipse cx="8.4" cy="5.4" rx="7.6" ry="5.4" fill="#000"/><path d="M3.4 8.6 Q3.2 11.6 0.2 13.3 Q5 13.2 7.4 10 Z" fill="#000"/></svg></div>
<div class="cell" style="left:510px;width:40px;padding-left:4.29px;">5.00</div>
<div class="cell" style="left:550px;width:130px;padding-left:4.29px;">2023-05-19 02:21 PM</div>
<div class="cell" style="left:680px;width:80px;text-align:right;padding-right:3.77px;">0</div>
<div class="cell" style="left:760px;width:80px;padding-left:4.29px;letter-spacing:-0.8px;">DAYS</div>
<div class="cell" style="left:840px;width:130px;padding-left:4.29px;">2023-05-19 02:21 PM</div>
<div class="cell" style="left:970px;width:80px;text-align:right;padding-right:3.77px;"></div>
<div class="cell" style="left:1050px;width:80px;text-align:right;padding-right:3.77px;">0.00</div>
<div class="cell" style="left:1130px;width:80px;text-align:right;padding-right:3.77px;">0.00</div>
<div class="cell" style="left:1210px;width:80px;text-align:right;padding-right:3.77px;">0.00</div>
</div>
<div style="left:0;top:216px;width:1283px;height:25px;background:#dcdcdc;">
<div class="cell" style="left:0px;width:30px;text-align:center;padding-left:1.6px;">10</div>
<div style="left:37.33px;top:4.29px;width:14.75px;height:14.29px"><svg viewBox="0 0 16 16" width="14.75" height="14.29" preserveAspectRatio="none"><circle cx="6.6" cy="6.6" r="5.3" fill="none" stroke="#6a6a6a" stroke-width="2.5"/><path d="M10.6 10.6 L14.7 14.7" stroke="#6a6a6a" stroke-width="2.7" stroke-linecap="round"/></svg></div>
<div style="left:67.35px;top:4.61px;width:13.77px;height:13.45px"><svg viewBox="0 0 16 16" width="13.77" height="13.45" preserveAspectRatio="none"><circle cx="8" cy="8" r="6.7" fill="none" stroke="#0a0a0a" stroke-width="2.6"/><path d="M8.7 3.9 V9.1 H5.2" fill="none" stroke="#444" stroke-width="1.7"/></svg></div>
<div style="left:97.62px;top:4.61px;width:14.03px;height:13.77px"><svg viewBox="0 0 16 16" width="14.03" height="13.77" preserveAspectRatio="none"><circle cx="8" cy="8" r="8" fill="#050505"/><path d="M8 3.4V12.6M3.4 8H12.6" stroke="#fff" stroke-width="2.9"/></svg></div>
<div style="left:155.18px;top:8.84px;width:12.86px;height:4.03px"><svg viewBox="0 0 12 3" width="12.86" height="4.03" preserveAspectRatio="none"><rect x="0" y="0" width="3" height="3" fill="#858585"/><rect x="4.5" y="0" width="3" height="3" fill="#858585"/><rect x="9" y="0" width="3" height="3" fill="#858585"/></svg></div>
<div class="cell" style="left:177.92px;">01.02.03</div>
<div class="cell" style="left:270px;width:200px;padding-left:4.29px;">Commissioning</div>
<div style="left:481.85px;top:6.11px;width:15.46px;height:12.86px"><svg viewBox="0 0 16 13.4" width="15.46" height="12.86" preserveAspectRatio="none"><ellipse cx="8.4" cy="5.4" rx="7.6" ry="5.4" fill="#000"/><path d="M3.4 8.6 Q3.2 11.6 0.2 13.3 Q5 13.2 7.4 10 Z" fill="#000"/></svg></div>
<div class="cell" style="left:510px;width:40px;padding-left:4.29px;">5.00</div>
<div class="cell" style="left:550px;width:130px;padding-left:4.29px;">2023-05-19 02:21 PM</div>
<div class="cell" style="left:680px;width:80px;text-align:right;padding-right:3.77px;">0</div>
<div class="cell" style="left:760px;width:80px;padding-left:4.29px;letter-spacing:-0.8px;">DAYS</div>
<div class="cell" style="left:840px;width:130px;padding-left:4.29px;">2023-05-19 02:21 PM</div>
<div class="cell" style="left:970px;width:80px;text-align:right;padding-right:3.77px;"></div>
<div class="cell" style="left:1050px;width:80px;text-align:right;padding-right:3.77px;">0.00</div>
<div class="cell" style="left:1130px;width:80px;text-align:right;padding-right:3.77px;">0.00</div>
<div class="cell" style="left:1210px;width:80px;text-align:right;padding-right:3.77px;">0.00</div>
</div>
<div style="left:0;top:240px;width:1283px;height:25px;background:#dcdcdc;">
<div class="cell" style="left:0px;width:30px;text-align:center;padding-left:1.6px;">11</div>
<div style="left:37.33px;top:4.29px;width:14.75px;height:14.29px"><svg viewBox="0 0 16 16" width="14.75" height="14.29" preserveAspectRatio="none"><circle cx="6.6" cy="6.6" r="5.3" fill="none" stroke="#6a6a6a" stroke-width="2.5"/><path d="M10.6 10.6 L14.7 14.7" stroke="#6a6a6a" stroke-width="2.7" stroke-linecap="round"/></svg></div>
<div style="left:67.35px;top:4.61px;width:13.77px;height:13.45px"><svg viewBox="0 0 16 16" width="13.77" height="13.45" preserveAspectRatio="none"><circle cx="8" cy="8" r="6.7" fill="none" stroke="#0a0a0a" stroke-width="2.6"/><path d="M8.7 3.9 V9.1 H5.2" fill="none" stroke="#444" stroke-width="1.7"/></svg></div>
<div style="left:97.62px;top:4.61px;width:14.03px;height:13.77px"><svg viewBox="0 0 16 16" width="14.03" height="13.77" preserveAspectRatio="none"><circle cx="8" cy="8" r="8" fill="#050505"/><path d="M8 3.4V12.6M3.4 8H12.6" stroke="#fff" stroke-width="2.9"/></svg></div>
<div style="left:155.18px;top:8.84px;width:12.86px;height:4.03px"><svg viewBox="0 0 12 3" width="12.86" height="4.03" preserveAspectRatio="none"><rect x="0" y="0" width="3" height="3" fill="#858585"/><rect x="4.5" y="0" width="3" height="3" fill="#858585"/><rect x="9" y="0" width="3" height="3" fill="#858585"/></svg></div>
<div class="cell" style="left:177.92px;">01.02.04</div>
<div class="cell" style="left:270px;width:200px;padding-left:4.29px;">Training</div>
<div style="left:481.85px;top:6.11px;width:15.46px;height:12.86px"><svg viewBox="0 0 16 13.4" width="15.46" height="12.86" preserveAspectRatio="none"><ellipse cx="8.4" cy="5.4" rx="7.6" ry="5.4" fill="#000"/><path d="M3.4 8.6 Q3.2 11.6 0.2 13.3 Q5 13.2 7.4 10 Z" fill="#000"/></svg></div>
<div class="cell" style="left:510px;width:40px;padding-left:4.29px;">5.00</div>
<div class="cell" style="left:550px;width:130px;padding-left:4.29px;">2023-05-19 02:21 PM</div>
<div class="cell" style="left:680px;width:80px;text-align:right;padding-right:3.77px;">0</div>
<div class="cell" style="left:760px;width:80px;padding-left:4.29px;letter-spacing:-0.8px;">DAYS</div>
<div class="cell" style="left:840px;width:130px;padding-left:4.29px;">2023-05-19 02:21 PM</div>
<div class="cell" style="left:970px;width:80px;text-align:right;padding-right:3.77px;"></div>
<div class="cell" style="left:1050px;width:80px;text-align:right;padding-right:3.77px;">0.00</div>
<div class="cell" style="left:1130px;width:80px;text-align:right;padding-right:3.77px;">0.00</div>
<div class="cell" style="left:1210px;width:80px;text-align:right;padding-right:3.77px;">0.00</div>
</div>
<div style="left:0;top:264px;width:1283px;height:24px;background:#fff;border-bottom:1px solid #e4e4e4;">
<div class="cell" style="left:0px;width:30px;border-right:1px solid #e2e2e2;text-align:center;padding-left:1.6px;">12</div>
<div class="cell" style="left:30px;width:30px;border-right:1px solid #e2e2e2;"></div>
<div class="cell" style="left:60px;width:30px;border-right:1px solid #e2e2e2;"></div>
<div class="cell" style="left:90px;width:30px;border-right:1px solid #e2e2e2;"></div>
<div class="cell" style="left:120px;width:150px;border-right:1px solid #e2e2e2;"></div>
<div class="cell" style="left:470px;width:40px;border-right:1px solid #e2e2e2;"></div>
<div style="left:37.33px;top:4.29px;width:14.75px;height:14.29px"><svg viewBox="0 0 16 16" width="14.75" height="14.29" preserveAspectRatio="none"><circle cx="6.6" cy="6.6" r="5.3" fill="none" stroke="#6a6a6a" stroke-width="2.5"/><path d="M10.6 10.6 L14.7 14.7" stroke="#6a6a6a" stroke-width="2.7" stroke-linecap="round"/></svg></div>
<div style="left:67.35px;top:4.61px;width:13.77px;height:13.45px"><svg viewBox="0 0 16 16" width="13.77" height="13.45" preserveAspectRatio="none"><circle cx="8" cy="8" r="6.7" fill="none" stroke="#0a0a0a" stroke-width="2.6"/><path d="M8.7 3.9 V9.1 H5.2" fill="none" stroke="#444" stroke-width="1.7"/></svg></div>
<div style="left:97.62px;top:4.61px;width:14.03px;height:13.77px"><svg viewBox="0 0 16 16" width="14.03" height="13.77" preserveAspectRatio="none"><circle cx="8" cy="8" r="8" fill="#050505"/><path d="M8 3.4V12.6M3.4 8H12.6" stroke="#fff" stroke-width="2.9"/></svg></div>
<div style="left:123.48px;top:9.36px;width:8.06px;height:4.87px"><svg viewBox="0 0 10 5.4" width="8.06" height="4.87" preserveAspectRatio="none"><path d="M0 0 H10 L5 5.4 Z" fill="#333"/></svg></div>
<div style="left:133.61px;top:4.61px;width:15.72px;height:12.67px"><svg viewBox="0 0 16 13" width="15.72" height="12.67" preserveAspectRatio="none"><path d="M0 1.4 Q0 0 1.4 0 H5.6 Q7 0 7 1.4 V1.8 H14.6 Q16 1.8 16 3.2 V11.6 Q16 13 14.6 13 H1.4 Q0 13 0 11.6 Z" fill="#444"/></svg></div>
<div class="cell" style="left:157.91px;">02</div>
<div class="cell" style="left:270px;width:200px;border-right:1px solid #e2e2e2;padding-left:4.29px;">Floor 2</div>
<div style="left:481.85px;top:6.11px;width:15.46px;height:12.86px"><svg viewBox="0 0 16 13.4" width="15.46" height="12.86" preserveAspectRatio="none"><ellipse cx="8.4" cy="5.4" rx="7.6" ry="5.4" fill="#000"/><path d="M3.4 8.6 Q3.2 11.6 0.2 13.3 Q5 13.2 7.4 10 Z" fill="#000"/></svg></div>
<div class="cell" style="left:510px;width:40px;border-right:1px solid #e2e2e2;padding-left:4.29px;">5.00</div>
<div class="cell" style="left:550px;width:130px;border-right:1px solid #e2e2e2;padding-left:4.29px;">2023-05-03 09:00 AM</div>
<div class="cell" style="left:680px;width:80px;border-right:1px solid #e2e2e2;text-align:right;padding-right:3.77px;">30</div>
<div class="cell" style="left:760px;width:80px;border-right:1px solid #e2e2e2;padding-left:4.29px;letter-spacing:-0.8px;">DAYS</div>
<div class="cell" style="left:840px;width:130px;border-right:1px solid #e2e2e2;padding-left:4.29px;">2023-06-02 09:00 AM</div>
<div class="cell" style="left:970px;width:80px;border-right:1px solid #e2e2e2;text-align:right;padding-right:3.77px;"></div>
<div class="cell" style="left:1050px;width:80px;border-right:1px solid #e2e2e2;text-align:right;padding-right:3.77px;">0.00</div>
<div class="cell" style="left:1130px;width:80px;border-right:1px solid #e2e2e2;text-align:right;padding-right:3.77px;">0.00</div>
<div class="cell" style="left:1210px;width:80px;border-right:1px solid #e2e2e2;text-align:right;padding-right:3.77px;">0.00</div>
</div>
<div style="left:0;top:288px;width:1283px;height:25px;background:#dcdcdc;">
<div class="cell" style="left:0px;width:30px;text-align:center;padding-left:1.6px;">13</div>
<div style="left:37.33px;top:4.29px;width:14.75px;height:14.29px"><svg viewBox="0 0 16 16" width="14.75" height="14.29" preserveAspectRatio="none"><circle cx="6.6" cy="6.6" r="5.3" fill="none" stroke="#6a6a6a" stroke-width="2.5"/><path d="M10.6 10.6 L14.7 14.7" stroke="#6a6a6a" stroke-width="2.7" stroke-linecap="round"/></svg></div>
<div style="left:67.35px;top:4.61px;width:13.77px;height:13.45px"><svg viewBox="0 0 16 16" width="13.77" height="13.45" preserveAspectRatio="none"><circle cx="8" cy="8" r="6.7" fill="none" stroke="#0a0a0a" stroke-width="2.6"/><path d="M8.7 3.9 V9.1 H5.2" fill="none" stroke="#444" stroke-width="1.7"/></svg></div>
<div style="left:97.62px;top:4.61px;width:14.03px;height:13.77px"><svg viewBox="0 0 16 16" width="14.03" height="13.77" preserveAspectRatio="none"><circle cx="8" cy="8" r="8" fill="#050505"/><path d="M8 3.4V12.6M3.4 8H12.6" stroke="#fff" stroke-width="2.9"/></svg></div>
<div style="left:134.13px;top:7.41px;width:4.42px;height:8.19px"><svg viewBox="0 0 5.4 10" width="4.42" height="8.19" preserveAspectRatio="none"><path d="M0 0 V10 L5.4 5 Z" fill="#333"/></svg></div>
<div style="left:145.18px;top:8.84px;width:12.86px;height:4.03px"><svg viewBox="0 0 12 3" width="12.86" height="4.03" preserveAspectRatio="none"><rect x="0" y="0" width="3" height="3" fill="#858585"/><rect x="4.5" y="0" width="3" height="3" fill="#858585"/><rect x="9" y="0" width="3" height="3" fill="#858585"/></svg></div>
<div class="cell" style="left:167.92px;">02.01</div>
<div class="cell" style="left:270px;width:200px;padding-left:4.29px;">Chemical Lab</div>
<div style="left:481.85px;top:6.11px;width:15.46px;height:12.86px"><svg viewBox="0 0 16 13.4" width="15.46" height="12.86" preserveAspectRatio="none"><ellipse cx="8.4" cy="5.4" rx="7.6" ry="5.4" fill="#000"/><path d="M3.4 8.6 Q3.2 11.6 0.2 13.3 Q5 13.2 7.4 10 Z" fill="#000"/></svg></div>
<div class="cell" style="left:510px;width:40px;padding-left:4.29px;">5.00</div>
<div class="cell" style="left:550px;width:130px;padding-left:4.29px;">2023-05-03 09:00 AM</div>
<div class="cell" style="left:680px;width:80px;text-align:right;padding-right:3.77px;">10</div>
<div class="cell" style="left:760px;width:80px;padding-left:4.29px;letter-spacing:-0.8px;">DAYS</div>
<div class="cell" style="left:840px;width:130px;padding-left:4.29px;">2023-05-13 09:00 AM</div>
<div class="cell" style="left:970px;width:80px;text-align:right;padding-right:3.77px;"></div>
<div class="cell" style="left:1050px;width:80px;text-align:right;padding-right:3.77px;">0.00</div>
<div class="cell" style="left:1130px;width:80px;text-align:right;padding-right:3.77px;">0.00</div>
<div class="cell" style="left:1210px;width:80px;text-align:right;padding-right:3.77px;">0.00</div>
</div>
<div style="left:0;top:312px;width:1283px;height:24px;background:#fff;border-bottom:1px solid #e4e4e4;">
<div class="cell" style="left:0px;width:30px;border-right:1px solid #e2e2e2;text-align:center;padding-left:1.6px;">14</div>
<div class="cell" style="left:30px;width:30px;border-right:1px solid #e2e2e2;"></div>
<div class="cell" style="left:60px;width:30px;border-right:1px solid #e2e2e2;"></div>
<div class="cell" style="left:90px;width:30px;border-right:1px solid #e2e2e2;"></div>
<div class="cell" style="left:120px;width:150px;border-right:1px solid #e2e2e2;"></div>
<div class="cell" style="left:470px;width:40px;border-right:1px solid #e2e2e2;"></div>
<div style="left:37.33px;top:4.29px;width:14.75px;height:14.29px"><svg viewBox="0 0 16 16" width="14.75" height="14.29" preserveAspectRatio="none"><circle cx="6.6" cy="6.6" r="5.3" fill="none" stroke="#6a6a6a" stroke-width="2.5"/><path d="M10.6 10.6 L14.7 14.7" stroke="#6a6a6a" stroke-width="2.7" stroke-linecap="round"/></svg></div>
<div style="left:67.35px;top:4.61px;width:13.77px;height:13.45px"><svg viewBox="0 0 16 16" width="13.77" height="13.45" preserveAspectRatio="none"><circle cx="8" cy="8" r="6.7" fill="none" stroke="#0a0a0a" stroke-width="2.6"/><path d="M8.7 3.9 V9.1 H5.2" fill="none" stroke="#444" stroke-width="1.7"/></svg></div>
<div style="left:97.62px;top:4.61px;width:14.03px;height:13.77px"><svg viewBox="0 0 16 16" width="14.03" height="13.77" preserveAspectRatio="none"><circle cx="8" cy="8" r="8" fill="#050505"/><path d="M8 3.4V12.6M3.4 8H12.6" stroke="#fff" stroke-width="2.9"/></svg></div>
<div style="left:133.61px;top:4.61px;width:15.72px;height:12.67px"><svg viewBox="0 0 16 13" width="15.72" height="12.67" preserveAspectRatio="none"><path d="M0 1.4 Q0 0 1.4 0 H5.6 Q7 0 7 1.4 V1.8 H14.6 Q16 1.8 16 3.2 V11.6 Q16 13 14.6 13 H1.4 Q0 13 0 11.6 Z" fill="#444"/></svg></div>
<div class="cell" style="left:157.91px;">03</div>
<div class="cell" style="left:270px;width:200px;border-right:1px solid #e2e2e2;padding-left:4.29px;">Floor 3</div>
<div style="left:481.85px;top:6.11px;width:15.46px;height:12.86px"><svg viewBox="0 0 16 13.4" width="15.46" height="12.86" preserveAspectRatio="none"><ellipse cx="8.4" cy="5.4" rx="7.6" ry="5.4" fill="#000"/><path d="M3.4 8.6 Q3.2 11.6 0.2 13.3 Q5 13.2 7.4 10 Z" fill="#000"/></svg></div>
<div class="cell" style="left:510px;width:40px;border-right:1px solid #e2e2e2;padding-left:4.29px;">5.00</div>
<div class="cell" style="left:550px;width:130px;border-right:1px solid #e2e2e2;padding-left:4.29px;">2023-05-03 09:00 AM</div>
<div class="cell" style="left:680px;width:80px;border-right:1px solid #e2e2e2;text-align:right;padding-right:3.77px;">30</div>
<div class="cell" style="left:760px;width:80px;border-right:1px solid #e2e2e2;padding-left:4.29px;letter-spacing:-0.8px;">DAYS</div>
<div class="cell" style="left:840px;width:130px;border-right:1px solid #e2e2e2;padding-left:4.29px;">2023-06-02 09:00 AM</div>
<div class="cell" style="left:970px;width:80px;border-right:1px solid #e2e2e2;text-align:right;padding-right:3.77px;"></div>
<div class="cell" style="left:1050px;width:80px;border-right:1px solid #e2e2e2;text-align:right;padding-right:3.77px;">0.00</div>
<div class="cell" style="left:1130px;width:80px;border-right:1px solid #e2e2e2;text-align:right;padding-right:3.77px;">0.00</div>
<div class="cell" style="left:1210px;width:80px;border-right:1px solid #e2e2e2;text-align:right;padding-right:3.77px;">0.00</div>
</div>
<div style="left:0;top:336px;width:1283px;height:24px;background:#fff;border-bottom:1px solid #e4e4e4;">
<div class="cell" style="left:0px;width:30px;border-right:1px solid #e2e2e2;text-align:center;padding-left:1.6px;">15</div>
<div class="cell" style="left:30px;width:30px;border-right:1px solid #e2e2e2;"></div>
<div class="cell" style="left:60px;width:30px;border-right:1px solid #e2e2e2;"></div>
<div class="cell" style="left:90px;width:30px;border-right:1px solid #e2e2e2;"></div>
<div class="cell" style="left:120px;width:150px;border-right:1px solid #e2e2e2;"></div>
<div class="cell" style="left:470px;width:40px;border-right:1px solid #e2e2e2;"></div>
<div style="left:37.33px;top:4.29px;width:14.75px;height:14.29px"><svg viewBox="0 0 16 16" width="14.75" height="14.29" preserveAspectRatio="none"><circle cx="6.6" cy="6.6" r="5.3" fill="none" stroke="#6a6a6a" stroke-width="2.5"/><path d="M10.6 10.6 L14.7 14.7" stroke="#6a6a6a" stroke-width="2.7" stroke-linecap="round"/></svg></div>
<div style="left:67.35px;top:4.61px;width:13.77px;height:13.45px"><svg viewBox="0 0 16 16" width="13.77" height="13.45" preserveAspectRatio="none"><circle cx="8" cy="8" r="6.7" fill="none" stroke="#0a0a0a" stroke-width="2.6"/><path d="M8.7 3.9 V9.1 H5.2" fill="none" stroke="#444" stroke-width="1.7"/></svg></div>
<div style="left:97.62px;top:4.61px;width:14.03px;height:13.77px"><svg viewBox="0 0 16 16" width="14.03" height="13.77" preserveAspectRatio="none"><circle cx="8" cy="8" r="8" fill="#050505"/><path d="M8 3.4V12.6M3.4 8H12.6" stroke="#fff" stroke-width="2.9"/></svg></div>
<div style="left:133.61px;top:4.61px;width:15.72px;height:12.67px"><svg viewBox="0 0 16 13" width="15.72" height="12.67" preserveAspectRatio="none"><path d="M0 1.4 Q0 0 1.4 0 H5.6 Q7 0 7 1.4 V1.8 H14.6 Q16 1.8 16 3.2 V11.6 Q16 13 14.6 13 H1.4 Q0 13 0 11.6 Z" fill="#444"/></svg></div>
<div class="cell" style="left:157.91px;">04</div>
<div class="cell" style="left:270px;width:200px;border-right:1px solid #e2e2e2;padding-left:4.29px;">Floor 4</div>
<div style="left:481.85px;top:6.11px;width:15.46px;height:12.86px"><svg viewBox="0 0 16 13.4" width="15.46" height="12.86" preserveAspectRatio="none"><ellipse cx="8.4" cy="5.4" rx="7.6" ry="5.4" fill="#000"/><path d="M3.4 8.6 Q3.2 11.6 0.2 13.3 Q5 13.2 7.4 10 Z" fill="#000"/></svg></div>
<div class="cell" style="left:510px;width:40px;border-right:1px solid #e2e2e2;padding-left:4.29px;">5.00</div>
<div class="cell" style="left:550px;width:130px;border-right:1px solid #e2e2e2;padding-left:4.29px;">2023-05-03 09:00 AM</div>
<div class="cell" style="left:680px;width:80px;border-right:1px solid #e2e2e2;text-align:right;padding-right:3.77px;">47</div>
<div class="cell" style="left:760px;width:80px;border-right:1px solid #e2e2e2;padding-left:4.29px;letter-spacing:-0.8px;">DAYS</div>
<div class="cell" style="left:840px;width:130px;border-right:1px solid #e2e2e2;padding-left:4.29px;">2023-06-19 09:00 AM</div>
<div class="cell" style="left:970px;width:80px;border-right:1px solid #e2e2e2;text-align:right;padding-right:3.77px;"></div>
<div class="cell" style="left:1050px;width:80px;border-right:1px solid #e2e2e2;text-align:right;padding-right:3.77px;">0.00</div>
<div class="cell" style="left:1130px;width:80px;border-right:1px solid #e2e2e2;text-align:right;padding-right:3.77px;">0.00</div>
<div class="cell" style="left:1210px;width:80px;border-right:1px solid #e2e2e2;text-align:right;padding-right:3.77px;">0.00</div>
</div>
</div>
<div style="left:24px;top:687px;width:1283px;height:15px;background:#f1f1f1"></div>
<div style="left:42px;top:689px;width:499px;height:11px;background:#c1c1c1"></div>
<div style="left:29.76px;top:691.53px;width:4.81px;height:6.37px"><svg viewBox="0 0 5.4 10" width="4.81" height="6.37" preserveAspectRatio="none"><path d="M5.4 0 V10 L0 5 Z" fill="#6c6c6c"/></svg></div>
<div style="left:1296.0px;top:691.53px;width:4.81px;height:6.37px"><svg viewBox="0 0 5.4 10" width="4.81" height="6.37" preserveAspectRatio="none"><path d="M0 0 V10 L5.4 5 Z" fill="#4a4a4a"/></svg></div>
<div style="left:24px;top:702px;width:1283px;height:26px;background:#dedede;border-top:1px solid #a8a8a8;border-bottom:1px solid #b8b8b8;overflow:hidden">
<div class="r" style="left:0px;top:0;width:30px;height:23px;line-height:23.6px;letter-spacing:-0.12px;border-right:1px solid #bdbdbd;padding-right:3.77px;"></div>
<div class="r" style="left:30px;top:0;width:30px;height:23px;line-height:23.6px;letter-spacing:-0.12px;border-right:1px solid #bdbdbd;padding-right:3.77px;"></div>
<div class="r" style="left:60px;top:0;width:30px;height:23px;line-height:23.6px;letter-spacing:-0.12px;border-right:1px solid #bdbdbd;padding-right:3.77px;"></div>
<div class="r" style="left:90px;top:0;width:30px;height:23px;line-height:23.6px;letter-spacing:-0.12px;border-right:1px solid #bdbdbd;padding-right:3.77px;"></div>
<div class="r" style="left:120px;top:0;width:150px;height:23px;line-height:23.6px;letter-spacing:-0.12px;border-right:1px solid #bdbdbd;padding-right:3.77px;"></div>
<div class="r" style="left:270px;top:0;width:200px;height:23px;line-height:23.6px;letter-spacing:-0.12px;border-right:1px solid #bdbdbd;padding-right:3.77px;"></div>
<div class="r" style="left:470px;top:0;width:40px;height:23px;line-height:23.6px;letter-spacing:-0.12px;border-right:1px solid #bdbdbd;padding-right:3.77px;"></div>
<div class="r" style="left:510px;top:0;width:40px;height:23px;line-height:23.6px;letter-spacing:-0.12px;border-right:1px solid #bdbdbd;padding-right:3.77px;"></div>
<div class="r" style="left:550px;top:0;width:130px;height:23px;line-height:23.6px;letter-spacing:-0.12px;border-right:1px solid #bdbdbd;padding-right:3.77px;"></div>
<div class="r" style="left:680px;top:0;width:80px;height:23px;line-height:23.6px;letter-spacing:-0.12px;border-right:1px solid #bdbdbd;padding-right:3.77px;"></div>
<div class="r" style="left:760px;top:0;width:80px;height:23px;line-height:23.6px;letter-spacing:-0.12px;border-right:1px solid #bdbdbd;padding-right:3.77px;"></div>
<div class="r" style="left:840px;top:0;width:130px;height:23px;line-height:23.6px;letter-spacing:-0.12px;border-right:1px solid #bdbdbd;padding-right:3.77px;"></div>
<div class="r" style="left:970px;top:0;width:80px;height:23px;line-height:23.6px;letter-spacing:-0.12px;border-right:1px solid #bdbdbd;padding-right:3.77px;">165.00</div>
<div class="r" style="left:1050px;top:0;width:80px;height:23px;line-height:23.6px;letter-spacing:-0.12px;border-right:1px solid #bdbdbd;padding-right:3.77px;"></div>
<div class="r" style="left:1130px;top:0;width:80px;height:23px;line-height:23.6px;letter-spacing:-0.12px;border-right:1px solid #bdbdbd;padding-right:3.77px;">0.00</div>
<div class="r" style="left:1210px;top:0;width:80px;height:23px;line-height:23.6px;letter-spacing:-0.12px;border-right:1px solid #bdbdbd;padding-right:3.77px;"></div>
</div>
<div style="left:24px;top:728px;width:1283px;height:28px;background:#dedede"></div>
<div style="left:37.29px;top:738.96px;width:10.85px;height:9.88px"><svg viewBox="0 0 8 8" width="10.85" height="9.88" preserveAspectRatio="none"><path d="M0.8 0 V8" stroke="#8a8a8a" stroke-width="1.6"/><path d="M7.4 0.4 L3.6 4 L7.4 7.6" fill="none" stroke="#8a8a8a" stroke-width="1.6"/></svg></div>
<div style="left:68.48px;top:738.96px;width:6.3px;height:9.88px"><svg viewBox="0 0 4.4 8" width="6.3" height="9.88" preserveAspectRatio="none"><path d="M3.8 0.4 L0.9 4 L3.8 7.6" fill="none" stroke="#8a8a8a" stroke-width="1.5"/></svg></div>
<div style="left:248.77px;top:738.96px;width:6.3px;height:9.88px"><svg viewBox="0 0 4.4 8" width="6.3" height="9.88" preserveAspectRatio="none"><path d="M0.6 0.4 L3.5 4 L0.6 7.6" fill="none" stroke="#8a8a8a" stroke-width="1.5"/></svg></div>
<div style="left:274.75px;top:738.96px;width:11.17px;height:9.88px"><svg viewBox="0 0 8 8" width="11.17" height="9.88" preserveAspectRatio="none"><path d="M7.2 0 V8" stroke="#8a8a8a" stroke-width="1.6"/><path d="M0.6 0.4 L4.4 4 L0.6 7.6" fill="none" stroke="#8a8a8a" stroke-width="1.6"/></svg></div>
<div class="t" style="left:132.93px;top:737.4px;font-size:11.2px;color:#333;letter-spacing:-0.241px;">1 to 15 of 15</div>
<div style="left:301.39px;top:735.06px;width:14.75px;height:16.05px"><svg viewBox="0 0 12 14" width="14.75" height="16.05" preserveAspectRatio="none"><path d="M4 0.5 H11.5 V13.5 H0.5 V4 Z" fill="#fbfbfb" stroke="#d2d2d2" stroke-width="0.9"/><path d="M4 0.5 V4 H0.5 Z" fill="#e6e6e6" stroke="#cfcfcf" stroke-width="0.7"/></svg></div>
<div class="t" style="left:324.58px;top:737.4px;font-size:11.2px;color:#333;letter-spacing:-0.603px;">Page 1</div>
<div style="left:365.97px;top:742.2px;width:8.06px;height:4.61px"><svg viewBox="0 0 10 5.4" width="8.06" height="4.61" preserveAspectRatio="none"><path d="M0 0 H10 L5 5.4 Z" fill="#333"/></svg></div>
<div style="left:384.88px;top:735.71px;width:14.75px;height:16.05px"><svg viewBox="0 0 12 14" width="14.75" height="16.05" preserveAspectRatio="none"><path d="M0.5 0.5 H11.5 V13.5 H0.5 Z" fill="#fbfbfb" stroke="#d6d6d6" stroke-width="0.9"/><path d="M2.4 3.4H9.6M2.4 5.4H9.6M2.4 7.4H9.6M2.4 9.4H9.6" stroke="#e2e2e2" stroke-width="0.8"/></svg></div>
<div class="t" style="left:408.0px;top:737.4px;font-size:11.2px;color:#333;letter-spacing:-0.317px;">100 rows per page</div>
<div style="left:504.03px;top:742.2px;width:8.06px;height:4.61px"><svg viewBox="0 0 10 5.4" width="8.06" height="4.61" preserveAspectRatio="none"><path d="M0 0 H10 L5 5.4 Z" fill="#333"/></svg></div>
</div>
<div id="f"><div style="left:0;top:0;width:1024px;height:1px;background:#f5f8fd"></div><div style="left:1px;top:1px;width:1px;height:595px;background:linear-gradient(#e9f0fc 0,#e9f0fc 22px,#dfeaf8 23px)"></div><div style="left:1022px;top:1px;width:1px;height:595px;background:linear-gradient(#f2f6fe 0,#f2f6fe 22px,#e8f0fb 23px)"></div><div style="left:1px;top:595px;width:1022px;height:1px;background:#d3e2f3"></div><div style="left:0;top:0;width:1px;height:597px;background:#222"></div><div style="left:1023px;top:0;width:1px;height:597px;background:#262626"></div><div style="left:0;top:596px;width:1024px;height:1px;background:#6b6b6b"></div><div style="left:0;top:597px;width:1024px;height:1px;background:#b3b4b7"></div></div>
</body></html>
